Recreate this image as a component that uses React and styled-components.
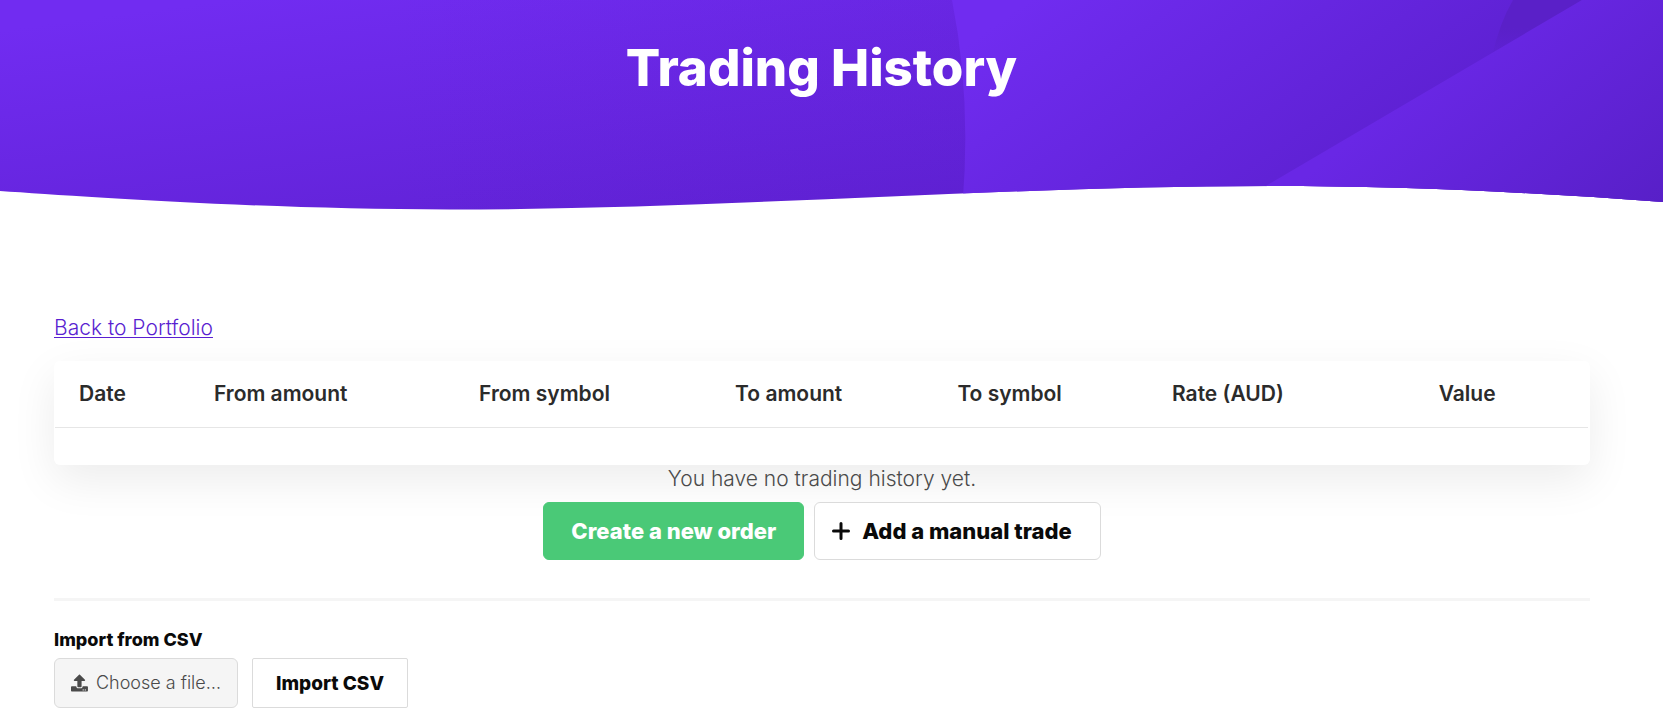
import React from "react";
import styled, { createGlobalStyle } from "styled-components";

const GlobalStyle = createGlobalStyle`
  *, *::before, *::after { box-sizing: border-box; }
  body {
    margin: 0;
    background: #fff;
    color: #4a4a4a;
    font-family: Inter, "Liberation Sans", sans-serif;
    font-size: 21px;
    font-weight: 300;
    line-height: 28px;
  }
`;

const Hero = styled.header`
  position: relative;
  height: 210px;
  padding: 38px 20px 0 0;
`;

const HeroArt = styled.svg`
  position: absolute;
  inset: 0;
  width: 100%;
  height: 100%;
`;

const Title = styled.h1`
  position: relative;
  margin: 0;
  color: #fff;
  font-size: 51px;
  font-weight: 800;
  line-height: 60px;
  text-align: center;
`;

const Content = styled.main`
  padding: 104px 73px 10px 54px;
`;

const BackLink = styled.a`
  display: table;
  color: #5a1fd1;
  text-decoration: underline;
  text-decoration-thickness: 1px;
  text-underline-offset: 2px;
`;

const Card = styled.div`
  margin-top: 19px;
  padding: 0 2px 1px 1px;
  background: #fff;
  border-radius: 6px;
  box-shadow: 0 15px 45px rgba(0, 0, 0, 0.08);
`;

const Table = styled.table`
  width: 100%;
  table-layout: fixed;
  border-collapse: collapse;
`;

const HeadCell = styled.th`
  width: ${(p) => p.$width};
  height: 66px;
  padding: 0 0 0 24px;
  border-bottom: 1px solid #e6e6e6;
  color: #2b2b2b;
  font-weight: 600;
  text-align: left;
  white-space: nowrap;
`;

const EmptyCell = styled.td`
  height: 37px;
  padding: 0;
`;

const EmptyState = styled.section`
  display: flex;
  flex-direction: column;
  align-items: center;
  gap: 9px;
`;

const Message = styled.p`
  margin: 0;
`;

const Actions = styled.div`
  display: flex;
  gap: 10px;
`;

const Button = styled.button`
  display: flex;
  align-items: center;
  justify-content: center;
  gap: 12px;
  height: 58px;
  padding: ${(p) => (p.$withIcon ? "0 28px 0 17px" : "0 27px")};
  border: 1px solid ${(p) => (p.$primary ? "#4ac977" : "#dbdbdb")};
  border-radius: 6px;
  background: ${(p) => (p.$primary ? "#4ac977" : "#fff")};
  color: ${(p) => (p.$primary ? "#fff" : "#0a0a0a")};
  font-family: inherit;
  font-size: 22px;
  font-weight: 800;
  cursor: pointer;
`;

const SmallButton = styled(Button)`
  height: 50px;
  padding: 0 23px;
  border-radius: 2px;
  font-size: 19px;
`;

const Divider = styled.hr`
  height: 3px;
  margin: 38px 0 25px;
  border: 0;
  background: #f5f5f5;
`;

const Field = styled.form`
  display: flex;
  flex-direction: column;
  align-items: flex-start;
  gap: 4px;
`;

const FieldLabel = styled.label`
  color: #0a0a0a;
  font-size: 18px;
  font-weight: 800;
`;

const FieldRow = styled.div`
  display: flex;
  gap: 14px;
`;

const FilePicker = styled.label`
  position: relative;
  display: flex;
  align-items: center;
  gap: 8px;
  width: 184px;
  height: 50px;
  padding: 0 16px;
  border: 1px solid #dbdbdb;
  border-radius: 6px;
  background: #f5f5f5;
  font-size: 18px;
  white-space: nowrap;
  cursor: pointer;
`;

const FileInput = styled.input`
  position: absolute;
  inset: 0;
  width: 100%;
  height: 100%;
  opacity: 0;
  cursor: pointer;
`;

const columns = [
  ["Date", "8.8%"],
  ["From amount", "17.3%"],
  ["From symbol", "16.7%"],
  ["To amount", "14.5%"],
  ["To symbol", "14%"],
  ["Rate (AUD)", "17.4%"],
  ["Value", "11.3%"],
];

function HeroBackground() {
  const wave =
    "M0 0H1663V202C1530 192 1400 186 1270 186C1000 186 720 209.500 450 209.500C260 209.500 75 196 0 191Z";
  return (
    <HeroArt viewBox="0 0 1663 210" preserveAspectRatio="none" aria-hidden="true">
      <defs>
        <clipPath id="wave">
          <path d={wave} />
        </clipPath>
        <linearGradient id="left" gradientUnits="userSpaceOnUse" x1="300" y1="-10" x2="340" y2="290">
          <stop offset="0" stopColor="#712cf1" />
          <stop offset="1" stopColor="#5f21d3" />
        </linearGradient>
        <linearGradient id="leftShade" x1="0" x2="1" y1="0" y2="0">
          <stop offset="0.4" stopColor="#5519c4" stopOpacity="0" />
          <stop offset="1" stopColor="#5519c4" stopOpacity="0.12" />
        </linearGradient>
        <linearGradient id="middle" gradientUnits="userSpaceOnUse" x1="1030" y1="0" x2="1260" y2="330">
          <stop offset="0" stopColor="#702cf0" />
          <stop offset="1" stopColor="#591ecb" />
        </linearGradient>
        <linearGradient id="wedge" x1="0" x2="0" y1="0" y2="1">
          <stop offset="0" stopColor="#5a20c8" />
          <stop offset="0.5" stopColor="#5a20c8" />
          <stop offset="1" stopColor="#5a20c8" stopOpacity="0" />
        </linearGradient>
        <linearGradient id="right" gradientUnits="userSpaceOnUse" x1="1400" y1="100" x2="1560" y2="300">
          <stop offset="0" stopColor="#6927e5" />
          <stop offset="1" stopColor="#571fc6" />
        </linearGradient>
      </defs>
      <g clipPath="url(#wave)">
        <rect width="1663" height="210" fill="url(#left)" />
        <rect width="966" height="210" fill="url(#leftShade)" />
        <path d="M952 0Q972 100 962 210H1663V0Z" fill="url(#middle)" />
        <path d="M1513 0Q1500 22 1492 56L1582 0Z" fill="url(#wedge)" />
        <path d="M1582 0L1225 210H1663V0Z" fill="url(#right)" />
      </g>
    </HeroArt>
  );
}

function PlusIcon() {
  return (
    <svg width="18" height="18" viewBox="0 0 18 18" aria-hidden="true">
      <path d="M9 1.500V16.500M1.500 9H16.500" stroke="currentColor" strokeWidth="3" strokeLinecap="round" />
    </svg>
  );
}

function UploadIcon() {
  return (
    <svg width="18" height="18" viewBox="0 0 512 512" fill="#4a4a4a" aria-hidden="true">
      <path d="M296 384h-80c-13.300 0-24-10.700-24-24V192h-87.700c-17.800 0-26.700-21.500-14.100-34.100L242.300 5.700c7.500-7.500 19.800-7.500 27.300 0l152.200 152.200c12.600 12.600 3.700 34.100-14.100 34.100H320v168c0 13.300-10.700 24-24 24zm216-8v112c0 13.300-10.700 24-24 24H24c-13.300 0-24-10.700-24-24V376c0-13.300 10.700-24 24-24h136v8c0 30.900 25.100 56 56 56h80c30.900 0 56-25.100 56-56v-8h136c13.300 0 24 10.700 24 24zm-124 88c0-11-9-20-20-20s-20 9-20 20 9 20 20 20 20-9 20-20zm64 0c0-11-9-20-20-20s-20 9-20 20 9 20 20 20 20-9 20-20z" />
    </svg>
  );
}

export default function App() {
  return (
    <>
      <GlobalStyle />
      <Hero>
        <HeroBackground />
        <Title>Trading History</Title>
      </Hero>
      <Content>
        <BackLink href="#portfolio">Back to Portfolio</BackLink>
        <Card>
          <Table>
            <thead>
              <tr>
                {columns.map(([name, width]) => (
                  <HeadCell key={name} scope="col" $width={width}>
                    {name}
                  </HeadCell>
                ))}
              </tr>
            </thead>
            <tbody>
              <tr>
                <EmptyCell colSpan={columns.length} />
              </tr>
            </tbody>
          </Table>
        </Card>
        <EmptyState>
          <Message>You have no trading history yet.</Message>
          <Actions>
            <Button type="button" $primary>
              Create a new order
            </Button>
            <Button type="button" $withIcon>
              <PlusIcon />
              Add a manual trade
            </Button>
          </Actions>
        </EmptyState>
        <Divider />
        <Field onSubmit={(e) => e.preventDefault()}>
          <FieldLabel htmlFor="csv">Import from CSV</FieldLabel>
          <FieldRow>
            <FilePicker>
              <FileInput id="csv" type="file" accept=".csv" />
              <UploadIcon />
              Choose a file…
            </FilePicker>
            <SmallButton type="submit">Import CSV</SmallButton>
          </FieldRow>
        </Field>
      </Content>
    </>
  );
}
